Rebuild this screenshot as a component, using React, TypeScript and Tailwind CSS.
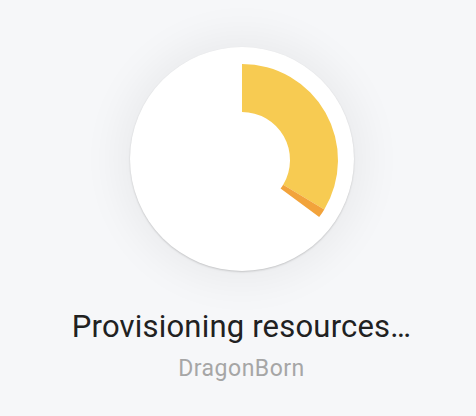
import React from "react";

function arcPath(cx: number, cy: number, r1: number, r2: number, a0: number, a1: number) {
  const p = (r: number, a: number) => {
    const rad = (a * Math.PI) / 180;
    return [cx + r * Math.sin(rad), cy - r * Math.cos(rad)];
  };
  const [x0, y0] = p(r2, a0);
  const [x1, y1] = p(r2, a1);
  const [x2, y2] = p(r1, a1);
  const [x3, y3] = p(r1, a0);
  const large = a1 - a0 > 180 ? 1 : 0;
  return `M${x0} ${y0} A${r2} ${r2} 0 ${large} 1 ${x1} ${y1} L${x2} ${y2} A${r1} ${r1} 0 ${large} 0 ${x3} ${y3} Z`;
}

export default function App() {
  return (
    <div className="w-[476px] h-[416px] bg-[#f6f7f9] flex flex-col items-center pl-[7px] pt-[47px]" style={{ fontFamily: "Roboto, 'Noto Sans', sans-serif" }}>
      <div className="w-[224px] h-[224px] shrink-0 rounded-full bg-white shadow-[0_1px_2px_rgba(0,0,0,0.18),0_0_40px_12px_rgba(0,0,0,0.05)]">
        <svg width="224" height="224" viewBox="0 0 224 224">
          <path d={arcPath(112, 113, 48, 96, 0, 121)} fill="#f7cb52" />
          <path d={arcPath(112, 113, 48, 96, 121, 126.5)} fill="#f2a33b" />
        </svg>
      </div>
      <div className="mt-[38px] text-[31px] leading-[36px] text-[#212121] tracking-[0.2px] whitespace-nowrap">Provisioning resources…</div>
      <div className="mt-[10px] text-[23px] leading-[28px] text-[#a6a6a6] tracking-[0.5px] whitespace-nowrap">DragonBorn</div>
    </div>
  );
}
